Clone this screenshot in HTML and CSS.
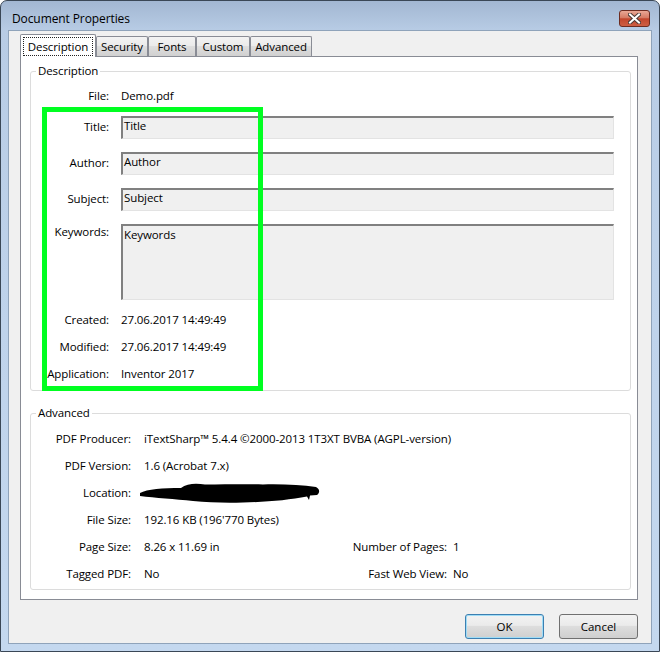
FILE: index.html
```html
<!DOCTYPE html>
<html lang="en">
<head>
<meta charset="UTF-8" />
<title>Document Properties</title>
<link rel="stylesheet" href="styles.css">
</head>
<body>

<div class="window">
<div class="titlebar">
<span class="title">Document Properties</span>
<button class="close" aria-label="Close">
<svg width="13" height="11" viewBox="0 0 13 11">
<path d="M2,1.5 L11,9.5 M11,1.5 L2,9.5" stroke="#4b3a36" stroke-width="4" stroke-linecap="square" />
<path d="M2,1.5 L11,9.5 M11,1.5 L2,9.5" stroke="#ffffff" stroke-width="2" stroke-linecap="square" />
</svg>
</button>
</div>

<div class="client">
<div class="tabs">
<div class="tab sel t-desc"><span class="focus">Description</span></div>
<div class="tab t-sec">Security</div>
<div class="tab t-fonts">Fonts</div>
<div class="tab t-custom">Custom</div>
<div class="tab t-adv">Advanced</div>
</div>

<div class="panel">
<div class="group desc">
<span class="legend">Description</span>
<div class="row file"><span class="lbl">File:</span><span>Demo.pdf</span></div>
<div class="row field"><span class="lbl">Title:</span><div class="input">Title</div></div>
<div class="row field"><span class="lbl">Author:</span><div class="input">Author</div></div>
<div class="row field"><span class="lbl">Subject:</span><div class="input">Subject</div></div>
<div class="row area"><span class="lbl">Keywords:</span><div class="input tall">Keywords</div></div>
<div class="row text"><span class="lbl">Created:</span><span>27.06.2017 14:49:49</span></div>
<div class="row text"><span class="lbl">Modified:</span><span>27.06.2017 14:49:49</span></div>
<div class="row text"><span class="lbl">Application:</span><span>Inventor 2017</span></div>
<div class="mark"></div>
</div>

<div class="group adv">
<span class="legend">Advanced</span>
<div class="adv-grid">
<span class="lbl">PDF Producer:</span><span class="val wide">iTextSharp™ 5.4.4 ©2000-2013 1T3XT BVBA (AGPL-version)</span>
<span class="lbl">PDF Version:</span><span class="val wide">1.6 (Acrobat 7.x)</span>
<span class="lbl">Location:</span>
<span class="val wide">
<svg class="scribble" width="182" height="20" viewBox="0 0 182 20">
<path d="M1,10 C8,6 24,5 42,5 C48,0 58,0 66,1.5 C86,1.5 106,1 124,1.5 C144,1 162,2 177,4 C181,6 181,10 178,12 L171,12.5 L170,17 L168,13.5 C150,17 128,19 104,19.5 C86,20 70,19.5 54,18 C36,16 16,15 1,13 Z" fill="#000" />
</svg>
</span>
<span class="lbl">File Size:</span><span class="val wide">192.16 KB (196'770 Bytes)</span>
<span class="lbl">Page Size:</span><span class="val">8.26 x 11.69 in</span>
<span class="lbl">Number of Pages:</span><span class="val2">1</span>
<span class="lbl">Tagged PDF:</span><span class="val">No</span>
<span class="lbl">Fast Web View:</span><span class="val2">No</span>
</div>
</div>
</div>

<div class="buttons">
<button class="btn default">OK</button>
<button class="btn">Cancel</button>
</div>
</div>
</div>

</body>
</html>
```

FILE: styles.css
```css
* { box-sizing: border-box; }

html, body {
margin: 0; padding: 0;
font-family: "Open Sans", "Noto Sans", sans-serif;
font-size: 11.5px; line-height: 16px; color: #000;
letter-spacing: -0.1px;
background: #ffffff;
}

.window {
width: 660px; height: 652px;
border: 1px solid #3a4756; border-radius: 7px 7px 0 0;
background: linear-gradient(#a2b7d2, #b8cce5 30px, #bfd3eb 50%, #c4d8ef);
display: flex; flex-direction: column;
padding: 0 7px 7px;
}

.titlebar {
height: 29px; flex: none;
display: flex; align-items: center;
padding: 6px 0 0 4px;
font-size: 12px;
}

.close {
margin-left: auto; margin-right: 2px;
width: 31px; height: 17px; padding: 0;
border: 1px solid #6d2c21; border-radius: 3px;
background: linear-gradient(#e9a896, #d57b64 45%, #c2462d 52%, #cd5e43);
display: flex; align-items: center; justify-content: center;
}

.client {
flex: 1;
background: #f0f0f0;
border: 1px solid #8fa3ba;
padding: 3px 13px 4px 11px;
display: flex; flex-direction: column;
}

/* tabs */
.tabs {
height: 22px; flex: none;
display: flex; align-items: flex-end;
}

.tab {
height: 20px;
border: 1px solid #898c95; border-bottom: none;
border-radius: 2px 2px 0 0;
background: linear-gradient(#f3f3f3, #ebebeb 45%, #dedede 50%, #d0d0d0);
display: flex; align-items: center; justify-content: center;
}

.tab.sel {
height: 23px; margin-bottom: -1px;
position: relative; z-index: 1;
background: #ffffff;
align-items: stretch;
padding: 2px 2px 1px;
}

.focus {
flex: 1;
border: 1px dotted #222;
display: flex; align-items: center; justify-content: center;
}

.t-desc { width: 76px; }
.t-sec { width: 52px; }
.t-fonts { width: 48px; }
.t-custom { width: 54px; }
.t-adv { width: 62px; }

.panel {
height: 544px; flex: none;
background: #ffffff;
border: 1px solid #898c95;
padding: 14px 6px 9px 9px;
display: flex; flex-direction: column; gap: 22px;
}

/* group boxes */
.group {
position: relative;
border: 1px solid #dcdcdc; border-radius: 3px;
}

.legend {
position: absolute; top: -9px; left: 5px;
padding: 0 2px; background: #ffffff;
}

.desc {
height: 320px;
padding: 11px 16px 3px 0;
display: flex; flex-direction: column;
}

.row {
display: grid;
grid-template-columns: 78px 1fr; column-gap: 12px;
align-items: center;
}

.row.file { height: 26px; margin-bottom: 7px; }
.row.field { height: 23px; margin-bottom: 13px; }
.row.field .lbl { margin-top: -1px; }
.row.area { height: 76px; margin-bottom: 7px; align-items: start; }
.row.text { height: 27px; }

.lbl { text-align: right; white-space: nowrap; }

.input {
height: 23px;
border-style: solid; border-width: 2px 1px 1px 2px;
border-color: #808080 #e3e3e3 #e3e3e3 #808080;
background: #f0f0f0;
padding: 0 1px;
}

.input.tall { height: 76px; padding-top: 1px; }

.mark {
position: absolute; left: 11px; top: 35px;
width: 221px; height: 284px;
border: 5px solid #00ff21;
}

.adv {
height: 177px;
padding: 11px 0 2px 0;
}

.adv-grid {
display: grid;
grid-template-columns: 100px 203px 113px 1fr;
grid-auto-rows: 27px;
align-items: center;
}

.val { padding-left: 13px; white-space: nowrap; }
.val2 { padding-left: 6px; }
.wide { grid-column: 2 / -1; }

.scribble { display: block; margin-left: -5px; }

/* buttons */
.buttons {
display: flex; justify-content: flex-end; gap: 15px;
margin-top: 14px;
}

.btn {
width: 79px; height: 25px; padding: 0;
font: inherit; color: #000;
border: 1px solid #707070; border-radius: 3px;
background: linear-gradient(#f2f2f2, #ebebeb 45%, #dddddd 50%, #cfcfcf);
}

.btn.default {
border-color: #3c7fb1;
box-shadow: inset 0 0 0 1px #9fdcf6;
}
```
